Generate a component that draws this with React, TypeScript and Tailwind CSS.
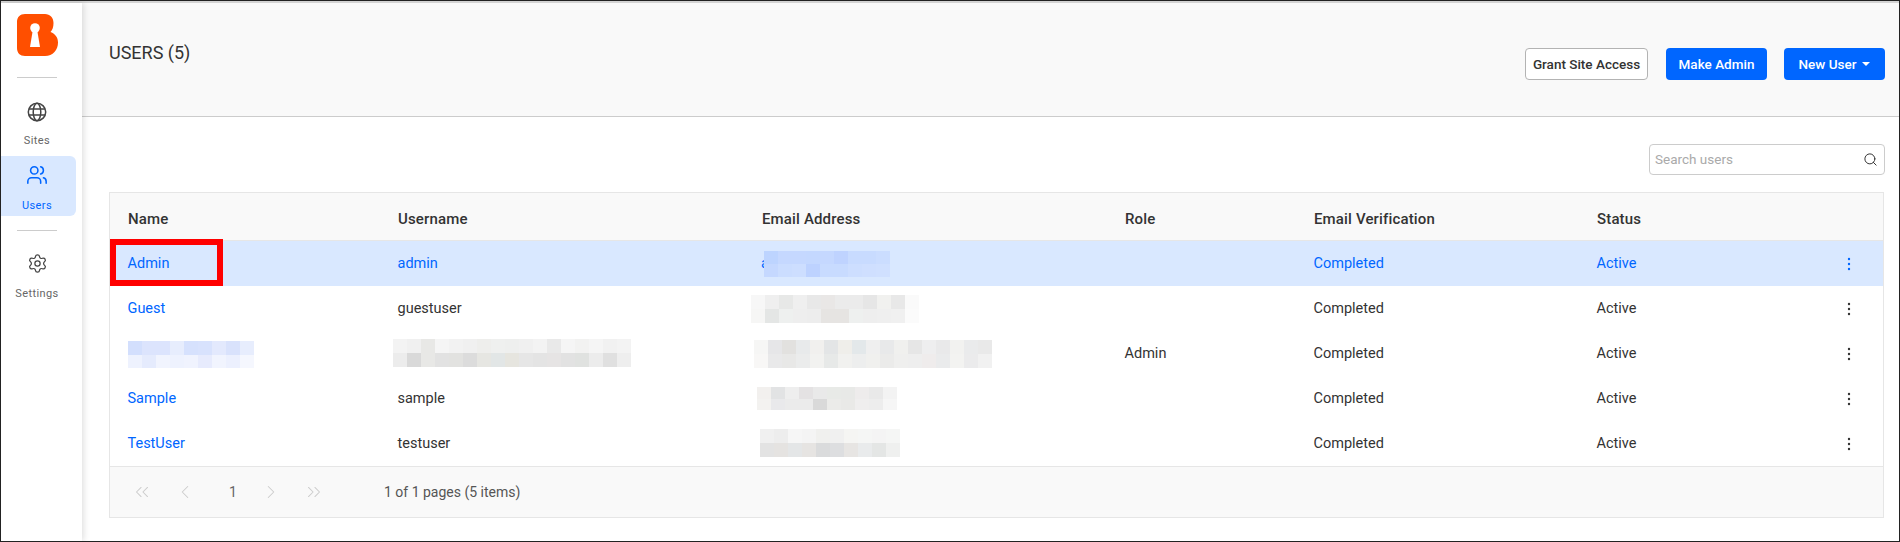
import { ChevronLeft, ChevronRight, ChevronsLeft, ChevronsRight, Search, Settings, Users } from "lucide-react";

// pixelated patches that hide personal data in the picture
function Mosaic({ rows, cellH = 14, className = "" }: { rows: string[][]; cellH?: number; className?: string }) {
  const cols = rows[0].length;
  return (
    <svg width={cols * 14} height={rows.length * cellH} className={`shrink-0 ${className}`} shapeRendering="crispEdges">
      {rows.map((row, y) =>
        row.map((fill, x) => <rect key={`${x}-${y}`} x={x * 14} y={y * cellH} width={14} height={cellH} fill={fill} />)
      )}
    </svg>
  );
}

const GRID = "grid grid-cols-[270px_364px_363px_189px_283px_237px_67px] items-center";

const nameBlur = [
  ["#d3dffd", "#dce4fd", "#dce4fd", "#e7edfd", "#d6e1fd", "#d8e2fd", "#e3e9fd", "#d9e2fc", "#e7edfd"],
  ["#eef2fe", "#e5ebfd", "#f1f4fe", "#eef2fe", "#f0f3fe", "#e7ebfd", "#f1f4fe", "#ecf0fe", "#f5f7fe"],
];
const usernameBlur = [
  ["#f3f3f3", "#f0f0f0", "#e8e8e6", "#f5f5f5", "#f2f2f2", "#f0f0f0", "#eeeeec", "#eff0ef", "#eeefee", "#f0f0f0", "#f3f3f3", "#e9e9e9", "#f5f5f5", "#f2f2f1", "#f5f5f5", "#f1f1f1", "#f3f3f3"],
  ["#ececec", "#d9d9d9", "#e8e8e6", "#e2e2e2", "#e2e2e0", "#dcdcdc", "#e6e6e2", "#e2e6e6", "#e6e5df", "#e6e6e6", "#e4e4e4", "#e6e4e4", "#e2e2e2", "#e0e2e0", "#ececec", "#e0e0e0", "#eeeeee"],
];
const emailBlurs = [
  [
    ["#bdd4ff", "#c5d8ff", "#c5d8ff", "#c4d8ff", "#c5d8ff", "#bfd3ff", "#c8dbff", "#c8dbff", "#cbddff"],
    ["#c5d8ff", "#cbddff", "#cddeff", "#bdd2ff", "#c8dbff", "#c8dbff", "#cddeff", "#cfdfff", "#d0e0ff"],
  ],
  [
    ["#f7f7f7", "#efefef", "#e7e8e7", "#efefef", "#e8e8e8", "#e9e7e6", "#ebebeb", "#ebebeb", "#e6e6e6", "#f1f1ef", "#e8e8e8", "#fafafa"],
    ["#f6f6f5", "#e4e6e5", "#eef0ef", "#eeeeee", "#ededed", "#e6e4e2", "#e6e4e2", "#eef0ef", "#eeeeee", "#efefef", "#f0f0f0", "#fbfbfb"],
  ],
  [
    ["#f6f6f5", "#e6e6e8", "#e2e1df", "#e8eaeb", "#f1f0ee", "#e3e5e6", "#efeeea", "#e3e8ea", "#efefef", "#e8e9ea", "#f0f0ee", "#e6e6e6", "#eeeeef", "#e9e9ea", "#f2f2f0", "#eaebec", "#e9e9e9"],
    ["#f8f7f6", "#e9e9ea", "#e8e8e7", "#ebecec", "#f2f2f0", "#e7e9e8", "#f1f1ef", "#edeeee", "#f0f0ee", "#ebebea", "#efefee", "#eeeeee", "#efecec", "#eaebec", "#f3f3f1", "#ebebec", "#f1f1f1"],
  ],
  [
    ["#f2f0ee", "#e2e3e4", "#eeeeee", "#e4e2e3", "#e9e9e9", "#e8eae7", "#e8e9e7", "#eeecec", "#e9e9e9", "#f3f3f3"],
    ["#f3f2f0", "#e9e9eb", "#ebebeb", "#ebebeb", "#d9d9d9", "#ebebe9", "#e9e9e7", "#efeeee", "#ededed", "#f6f6f6"],
  ],
  [
    ["#f0f0f0", "#ededed", "#f6f6f6", "#f4f4f4", "#f0f0ee", "#f0f0f0", "#f5f5f3", "#f5f6f5", "#f4f4f4", "#f5f6f5"],
    ["#e3e3e3", "#e5e3e1", "#e4e6e7", "#e6e4e2", "#dadbdc", "#dddee0", "#e7e5e3", "#e9ebec", "#e4e6e5", "#eff0ef"],
  ],
];

function Dots({ active }: { active?: boolean }) {
  return (
    <svg width="4" height="14" viewBox="0 0 4 14" className={active ? "fill-[#0066ff]" : "fill-[#333333]"}>
      <circle cx="2" cy="2" r="1.2" />
      <circle cx="2" cy="7" r="1.2" />
      <circle cx="2" cy="12" r="1.2" />
    </svg>
  );
}

function Logo() {
  return (
    <svg width="41" height="42" viewBox="0 0 41 42">
      <path
        d="M8 0H28C33 0 36.5 3.5 36.5 9C36.5 13 35.5 16 33.5 18C38.5 20 41 23.5 41 28.5C41 36 36 42 28 42H8C3 42 0 39 0 34V8C0 3 3 0 8 0Z"
        fill="#ff4f00"
      />
      <circle cx="18" cy="14" r="4.8" fill="#fff" />
      <path d="M15.5 18H20.5L23 33H13Z" fill="#fff" />
    </svg>
  );
}

function GlobeIcon() {
  return (
    <svg width="20" height="20" viewBox="0 0 20 20" fill="none" stroke="#444" strokeWidth="1.5">
      <circle cx="10" cy="10" r="8.7" />
      <ellipse cx="10" cy="10" rx="3.8" ry="8.7" />
      <path d="M2 7H18M2 13H18" />
    </svg>
  );
}

export default function App() {
  const tail = (
    <>
      <span>Completed</span>
      <span>Active</span>
    </>
  );
  const bodyRow = `${GRID} h-[45px] [&>span]:pl-[17.5px] pt-[1px] text-[14.5px]`;

  return (
    <div className="w-[1900px] h-[542px] box-border border border-[#222222] flex flex-col bg-white overflow-hidden font-['Roboto',sans-serif] text-[14px] text-[#333333]">
      <div className="h-[2px] shrink-0 bg-[#d4d4d4]" />
      <div className="flex-1 min-h-0 flex">
        {/* SIDEBAR */}
        <aside className="w-[81px] shrink-0 flex flex-col items-stretch bg-white z-10 shadow-[2px_0_6px_rgba(0,0,0,0.12)]">
          <div className="h-[74px] shrink-0 pt-[11px] pl-[16px]">
            <Logo />
          </div>
          <div className="h-px w-10 ml-[16px] bg-[#cccccc]" />
          <div className="h-[78px] shrink-0 flex flex-col items-center w-[72px] pt-[24px] text-[11px] text-[#666666] leading-none">
            <GlobeIcon />
            <span className="mt-[13px] tracking-[0.4px]">Sites</span>
          </div>
          <div className="h-[60px] shrink-0 w-[75px] flex flex-col items-center pr-[3px] pt-[8px] bg-[#d9e8ff] rounded-r-[6px] text-[11px] text-[#0066ff] leading-none">
            <Users size={22} strokeWidth={1.7} />
            <span className="mt-[14px] tracking-[0.4px]">Users</span>
          </div>
          <div className="h-px w-10 ml-[16px] mt-[14px] bg-[#cccccc]" />
          <div className="flex flex-col items-center w-[72px] pt-[22px] text-[11px] text-[#666666] leading-none">
            <Settings size={21} strokeWidth={1.4} className="text-[#444444]" />
            <span className="mt-[14px] tracking-[0.4px]">Settings</span>
          </div>
        </aside>

        <main className="flex-1 min-w-0 flex flex-col">
          {/* PAGE HEADER */}
          <header className="h-[114px] shrink-0 box-border bg-[#f9f9f9] border-b border-[#cccccc] flex justify-between pl-[27px] pr-[14px]">
            <h1 className="mt-[39px] text-[18px] leading-[22px] font-normal">USERS (5)</h1>
            <div className="flex items-start gap-[17px] mt-[45px]">
              <button className="h-8 w-[123px] mr-px bg-white border border-[#b3b3b3] rounded-[4px] text-[13.5px] font-medium">Grant Site Access</button>
              <button className="h-8 w-[101px] bg-[#0066ff] rounded-[4px] text-[13.5px] font-medium text-white">Make Admin</button>
              <button className="h-8 w-[101px] bg-[#0066ff] rounded-[4px] text-[13.5px] font-medium text-white flex items-center justify-center gap-[6px]">
                New User
                <span className="w-0 h-0 border-x-[4px] border-x-transparent border-t-[4px] border-t-white" />
              </button>
            </div>
          </header>

          <div className="pl-[27px] pr-[14px]">
            {/* SEARCH */}
            <div className="h-[75px] flex justify-end items-start pt-[27px]">
              <div className="w-[236px] h-[31px] box-border border border-[#cccccc] rounded-[4px] flex items-center justify-between pl-[5px] pr-[6px]">
                <span className="text-[13.5px] text-[#aaaaaa]">Search users</span>
                <Search size={15} strokeWidth={1.6} className="text-[#333333]" />
              </div>
            </div>

            {/* TABLE */}
            <div className="relative w-[1775px] box-border border border-[#e6e6e6]">
              <div className={`${GRID} h-[48px] pt-[5px] bg-[#f9f9f9] border-b border-[#e6e6e6] box-border font-medium text-[15px] tracking-[0.15px] [&>span]:pl-[18px]`}>
                <span>Name</span>
                <span>Username</span>
                <span>Email Address</span>
                <span>Role</span>
                <span>Email Verification</span>
                <span>Status</span>
              </div>

              <div className={`${bodyRow} bg-[#d9e8ff] text-[#0066ff]`}>
                <span>Admin</span>
                <span>admin</span>
                <div className="pl-[17px] flex items-center">
                  <span className="w-[3px] shrink-0 leading-none">a</span>
                  <Mosaic rows={emailBlurs[0]} cellH={13} />
                </div>
                <span />
                <span>Completed</span>
                <span>Active</span>
                <div className="flex justify-end pr-[32px]">
                  <Dots active />
                </div>
              </div>

              <div className={bodyRow}>
                <span className="text-[#0066ff]">Guest</span>
                <span>guestuser</span>
                <div className="pl-[7px]">
                  <Mosaic rows={emailBlurs[1]} />
                </div>
                <span />
                {tail}
                <div className="flex justify-end pr-[32px]">
                  <Dots />
                </div>
              </div>

              <div className={bodyRow}>
                <div className="pl-[18px] flex">
                  <Mosaic rows={nameBlur} cellH={13.5} />
                </div>
                <div className="pl-[13px] flex">
                  <Mosaic rows={usernameBlur} className="-mt-[3px]" />
                </div>
                <div className="pl-[10px] flex">
                  <Mosaic rows={emailBlurs[2]} />
                </div>
                <span>Admin</span>
                {tail}
                <div className="flex justify-end pr-[32px]">
                  <Dots />
                </div>
              </div>

              <div className={bodyRow}>
                <span className="text-[#0066ff]">Sample</span>
                <span>sample</span>
                <div className="pl-[13px] flex">
                  <Mosaic rows={emailBlurs[3]} cellH={11.5} className="-mt-[2px]" />
                </div>
                <span />
                {tail}
                <div className="flex justify-end pr-[32px]">
                  <Dots />
                </div>
              </div>

              <div className={bodyRow}>
                <span className="text-[#0066ff]">TestUser</span>
                <span>testuser</span>
                <div className="pl-[16px] flex">
                  <Mosaic rows={emailBlurs[4]} className="-mt-[3px]" />
                </div>
                <span />
                {tail}
                <div className="flex justify-end pr-[32px]">
                  <Dots />
                </div>
              </div>

              {/* PAGINATION */}
              <div className="h-[51px] box-border bg-[#f9f9f9] border-t border-[#e6e6e6] flex items-center text-[#cccccc]">
                <ChevronsLeft size={22} strokeWidth={1.1} className="ml-[21px]" />
                <ChevronLeft size={22} strokeWidth={1.1} className="ml-[21px]" />
                <span className="ml-[33px] w-[8px] text-[#666666]">1</span>
                <ChevronRight size={22} strokeWidth={1.1} className="ml-[23px]" />
                <ChevronsRight size={22} strokeWidth={1.1} className="ml-[21px]" />
                <span className="ml-[59px] text-[#555555]">1 of 1 pages (5 items)</span>
              </div>

              {/* red callout around the first name cell */}
              <div className="absolute left-0 top-[46px] w-[113px] h-[47px] box-border border-[6px] border-[#ff0000]" />
            </div>
          </div>
        </main>
      </div>
    </div>
  );
}
